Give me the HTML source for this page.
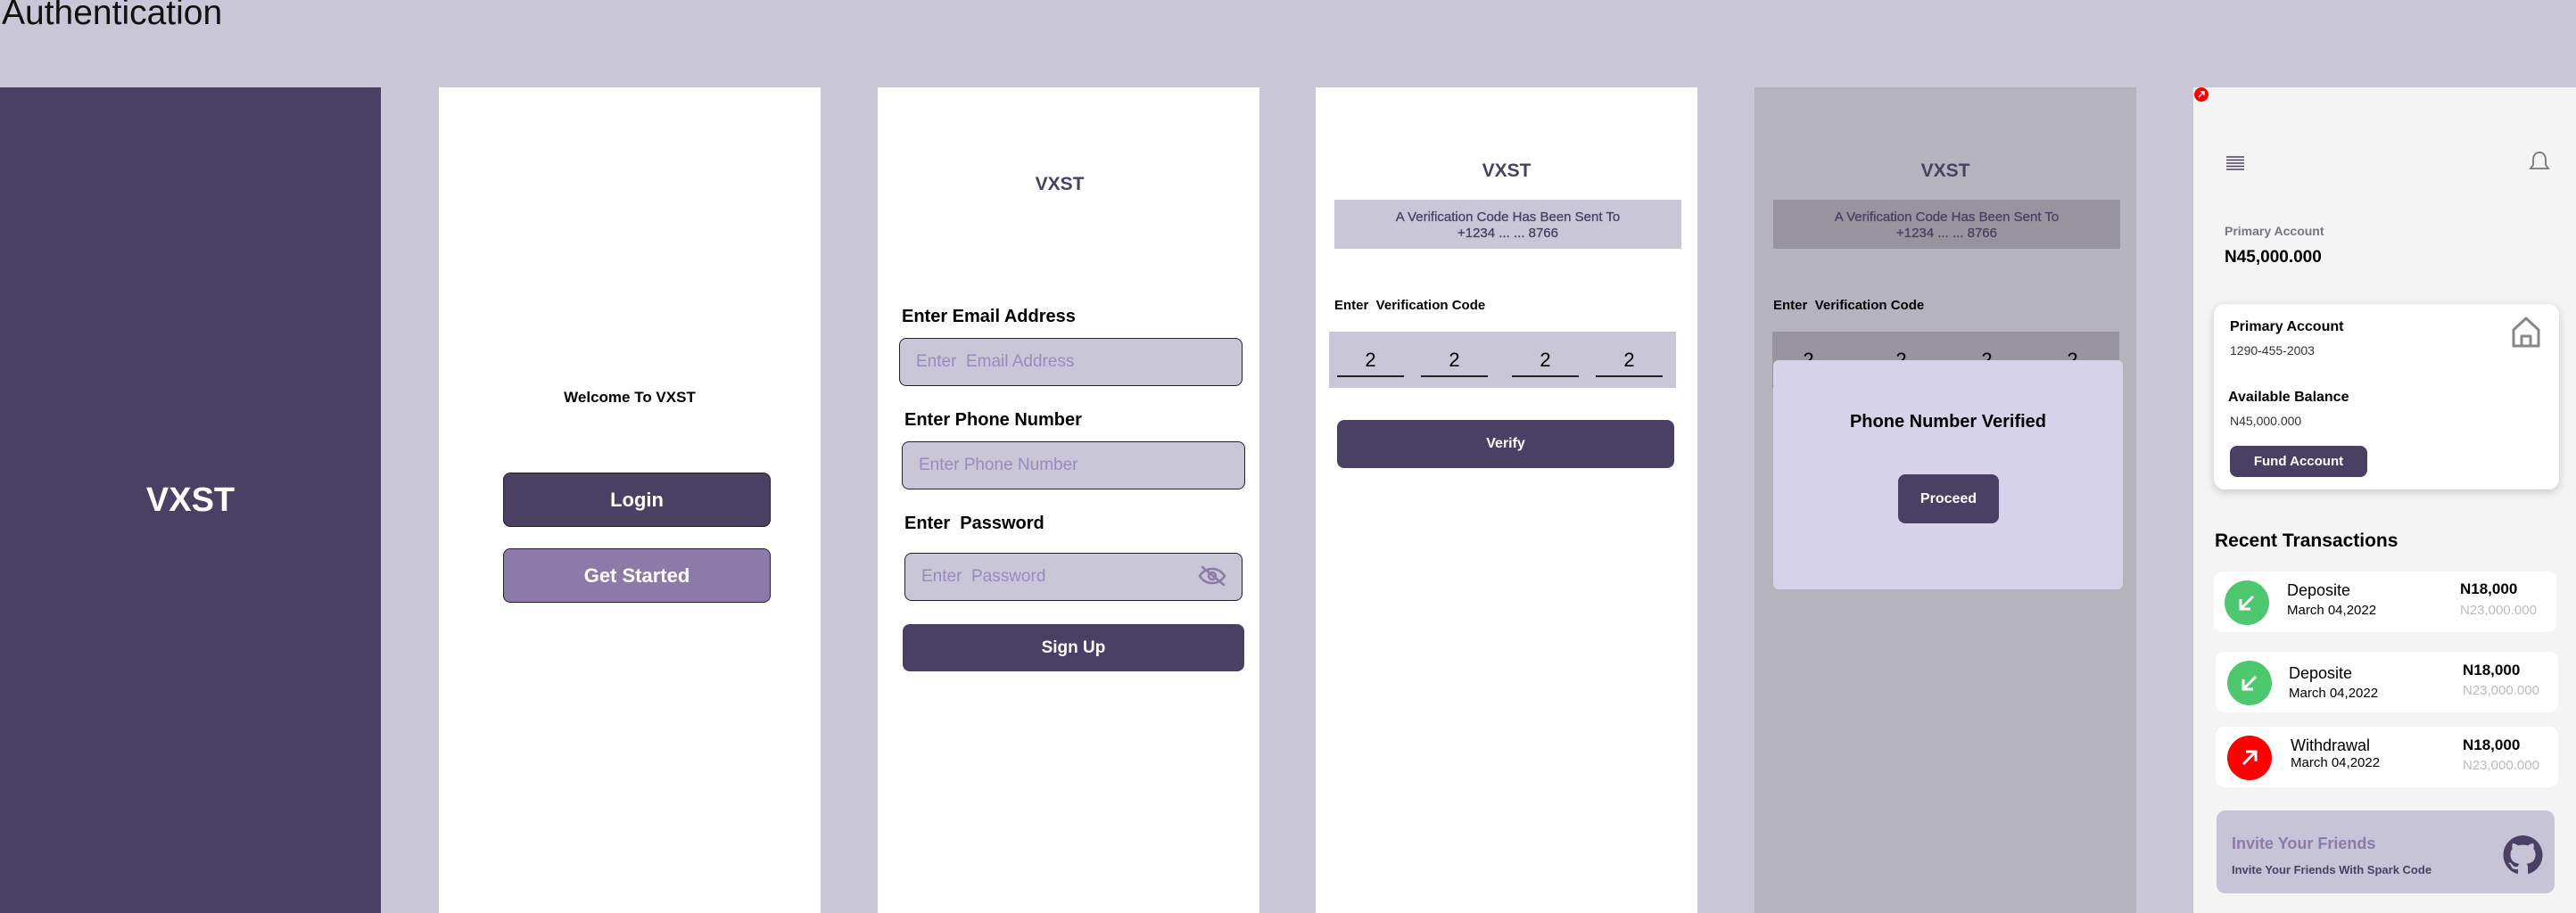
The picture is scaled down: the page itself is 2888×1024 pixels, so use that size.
<!DOCTYPE html>
<html><head><meta charset="utf-8"><style>
*{margin:0;padding:0;box-sizing:border-box}
body{width:2888px;height:1024px;background:#c9c6d8;position:relative;overflow:hidden;font-family:"Liberation Sans",sans-serif;color:#000}
.a{position:absolute}
.t{position:absolute;white-space:nowrap;line-height:1}
.fr{position:absolute;top:98px;height:926px;width:428px}
.inp{position:absolute;background:#c9c6d8;border:1.5px solid #222;border-radius:8px}
.ph{position:absolute;left:18px;top:50%;transform:translateY(-50%);color:#9b8bbd;font-size:19px;white-space:nowrap}
.btn{position:absolute;background:#4a4063;border-radius:8px;color:#fff;font-weight:bold;display:flex;align-items:center;justify-content:center}
.ul{position:absolute;height:2px;background:#222}
.dg{position:absolute;font-size:22px;width:75px;text-align:center;line-height:1}
.row{position:absolute;background:#fff;border-radius:10px}
.circ{position:absolute;width:50px;height:50px;border-radius:50%}
</style></head><body>
<div class="t" style="left:2px;top:-5px;font-size:39px;color:#111">Authentication</div>

<!-- frame1 -->
<div class="fr" style="left:0;width:427px;background:#4a4063"></div>
<div class="t" style="left:0;width:427px;text-align:center;top:542px;font-size:38px;font-weight:bold;color:#fff">VXST</div>

<!-- frame2 -->
<div class="fr" style="left:492px;background:#fff"></div>
<div class="t" style="left:492px;width:428px;text-align:center;top:437px;font-size:17px;font-weight:bold">Welcome To VXST</div>
<div class="btn" style="left:564px;top:530px;width:300px;height:61px;border:1.5px solid #222;font-size:22px">Login</div>
<div class="btn" style="left:564px;top:615px;width:300px;height:61px;border:1.5px solid #222;background:#8c7aa9;font-size:22px">Get Started</div>

<!-- frame3 -->
<div class="fr" style="left:984px;background:#fff"></div>
<div class="t" style="left:974px;width:428px;text-align:center;top:196px;font-size:21px;font-weight:bold;color:#4a4063">VXST</div>
<div class="t" style="left:1011px;top:345px;font-size:20px;font-weight:bold">Enter Email Address</div>
<div class="inp" style="left:1008px;top:379px;width:385px;height:54px"><span class="ph">Enter&nbsp; Email Address</span></div>
<div class="t" style="left:1014px;top:461px;font-size:20px;font-weight:bold">Enter Phone Number</div>
<div class="inp" style="left:1011px;top:495px;width:385px;height:54px"><span class="ph">Enter Phone Number</span></div>
<div class="t" style="left:1014px;top:577px;font-size:20px;font-weight:bold">Enter&nbsp; Password</div>
<div class="inp" style="left:1014px;top:620px;width:379px;height:54px"><span class="ph">Enter&nbsp; Password</span>
<svg class="a" style="left:328px;top:13px" width="32" height="24" viewBox="0 0 32 24" fill="none" stroke="#8c7aa9" stroke-width="2.5" stroke-linecap="round"><path d="M2 12C6 6 11 4 16 4s10 2 14 8c-4 6-9 8-14 8S6 18 2 12z"/><circle cx="16" cy="12" r="4"/><path d="M5 2l24 20"/></svg></div>
<div class="btn" style="left:1012px;top:700px;width:383px;height:53px;font-size:19px">Sign Up</div>

<!-- frame4 -->
<div class="fr" style="left:1475px;background:#fff"></div>
<div class="t" style="left:1475px;width:428px;text-align:center;top:181px;font-size:21px;font-weight:bold;color:#4a4063">VXST</div>
<div class="a" style="left:1496px;top:224px;width:389px;height:55px;background:#c9c6d8"></div>
<div class="t" style="left:1496px;width:389px;text-align:center;top:235px;font-size:15px;color:#4a4063;line-height:18px;-webkit-text-stroke:0.3px #4a4063">A Verification Code Has Been Sent To<br>+1234 ... ... 8766</div>
<div class="t" style="left:1496px;top:335px;font-size:15px;font-weight:bold">Enter&nbsp; Verification Code</div>
<div class="a" style="left:1490px;top:372px;width:389px;height:63px;background:#c9c6d8"></div>
<div class="dg" style="left:1499px;top:393px">2</div><div class="dg" style="left:1593px;top:393px">2</div><div class="dg" style="left:1695px;top:393px">2</div><div class="dg" style="left:1789px;top:393px">2</div>
<div class="ul" style="left:1499px;top:421px;width:75px"></div><div class="ul" style="left:1593px;top:421px;width:75px"></div><div class="ul" style="left:1695px;top:421px;width:75px"></div><div class="ul" style="left:1789px;top:421px;width:75px"></div>
<div class="btn" style="left:1499px;top:471px;width:378px;height:54px;font-size:16px">Verify</div>

<!-- frame5 -->
<div class="fr" style="left:1967px;background:#b5b3be"></div>
<div class="t" style="left:1967px;width:428px;text-align:center;top:181px;font-size:21px;font-weight:bold;color:#4a4063">VXST</div>
<div class="a" style="left:1988px;top:224px;width:389px;height:55px;background:#97939f"></div>
<div class="t" style="left:1988px;width:389px;text-align:center;top:235px;font-size:15px;color:#4a4063;line-height:18px;-webkit-text-stroke:0.3px #4a4063">A Verification Code Has Been Sent To<br>+1234 ... ... 8766</div>
<div class="t" style="left:1988px;top:335px;font-size:15px;font-weight:bold">Enter&nbsp; Verification Code</div>
<div class="a" style="left:1987px;top:372px;width:389px;height:63px;background:#97939f"></div>
<div class="dg" style="left:1990px;top:393px">2</div><div class="dg" style="left:2094px;top:393px">2</div><div class="dg" style="left:2190px;top:393px">2</div><div class="dg" style="left:2286px;top:393px">2</div>
<div class="a" style="left:1988px;top:404px;width:392px;height:257px;background:#d5d2ea;border-radius:6px"></div>
<div class="t" style="left:1988px;width:392px;text-align:center;top:463px;font-size:20px;font-weight:bold">Phone Number Verified</div>
<div class="btn" style="left:2128px;top:532px;width:113px;height:55px;font-size:16px">Proceed</div>

<!-- frame6 -->
<div class="fr" style="left:2459px;width:429px;background:#f4f4f4"></div>
<div class="a" style="left:2460px;top:98px;width:16px;height:16px;border-radius:50%;background:#f00"></div>
<svg class="a" style="left:2463px;top:101px" width="10" height="10" fill="none" stroke="#fff" stroke-width="1.4"><path d="M2 8L8 2M4 2h4v4"/></svg>
<svg class="a" style="left:2496px;top:175px" width="20" height="16"><g stroke="#4a4063" stroke-width="1.6"><path d="M0 1h20M0 4.5h20M0 8h20M0 11.5h20M0 15h20"/></g></svg>
<svg class="a" style="left:2835px;top:169px" width="24" height="25" viewBox="0 0 24 25" fill="none" stroke="#777" stroke-width="1.8"><path d="M12 2c-4.5 0-7 3.5-7 8v6l-3 4h20l-3-4v-6c0-4.5-2.5-8-7-8z"/><path d="M12 1v2"/></svg>
<div class="t" style="left:2494px;top:252px;font-size:14px;font-weight:bold;color:#7a748a">Primary Account</div>
<div class="t" style="left:2494px;top:279px;font-size:19px;font-weight:bold">N45,000.000</div>
<div class="a" style="left:2482px;top:341px;width:387px;height:208px;background:#fff;border-radius:12px;box-shadow:0 3px 10px rgba(0,0,0,.18)"></div>
<div class="t" style="left:2500px;top:359px;font-size:16px;font-weight:bold">Primary Account</div>
<div class="t" style="left:2500px;top:386px;font-size:14px;color:#333">1290-455-2003</div>
<svg class="a" style="left:2816px;top:355px" width="32" height="35" viewBox="0 0 32 35" fill="none" stroke="#888" stroke-width="3" stroke-linejoin="round"><path d="M2 15L16 2l14 13v18H2z"/><path d="M11 33V22h10v11"/></svg>
<div class="t" style="left:2498px;top:438px;font-size:16px;font-weight:bold">Available Balance</div>
<div class="t" style="left:2500px;top:465px;font-size:14px;color:#333">N45,000.000</div>
<div class="btn" style="left:2500px;top:500px;width:154px;height:35px;font-size:15px">Fund Account</div>
<div class="t" style="left:2483px;top:596px;font-size:21px;font-weight:bold">Recent Transactions</div>

<div class="row" style="left:2482px;top:641px;width:384px;height:68px"></div>
<div class="circ" style="left:2494px;top:651px;background:#4ec86f"></div>
<svg class="a" style="left:2507px;top:664px" width="24" height="24" fill="none" stroke="#fff" stroke-width="3"><path d="M19 5L6 18M5 8v11h11"/></svg>
<div class="t" style="left:2564px;top:653px;font-size:18px">Deposite</div>
<div class="t" style="left:2564px;top:677px;font-size:15px">March 04,2022</div>
<div class="t" style="left:2758px;top:652px;font-size:17px;font-weight:bold">N18,000</div>
<div class="t" style="left:2758px;top:677px;font-size:15px;color:#bbb">N23,000.000</div>

<div class="row" style="left:2484px;top:731px;width:384px;height:68px"></div>
<div class="circ" style="left:2497px;top:741px;background:#4ec86f"></div>
<svg class="a" style="left:2510px;top:754px" width="24" height="24" fill="none" stroke="#fff" stroke-width="3"><path d="M19 5L6 18M5 8v11h11"/></svg>
<div class="t" style="left:2566px;top:746px;font-size:18px">Deposite</div>
<div class="t" style="left:2566px;top:770px;font-size:15px">March 04,2022</div>
<div class="t" style="left:2761px;top:743px;font-size:17px;font-weight:bold">N18,000</div>
<div class="t" style="left:2761px;top:767px;font-size:15px;color:#bbb">N23,000.000</div>

<div class="row" style="left:2484px;top:815px;width:384px;height:68px"></div>
<div class="circ" style="left:2497px;top:825px;background:#f00"></div>
<svg class="a" style="left:2510px;top:838px" width="24" height="24" fill="none" stroke="#fff" stroke-width="3"><path d="M5 19L18 6M8 5h11v11"/></svg>
<div class="t" style="left:2568px;top:827px;font-size:18px">Withdrawal</div>
<div class="t" style="left:2568px;top:848px;font-size:15px">March 04,2022</div>
<div class="t" style="left:2761px;top:827px;font-size:17px;font-weight:bold">N18,000</div>
<div class="t" style="left:2761px;top:851px;font-size:15px;color:#bbb">N23,000.000</div>

<div class="a" style="left:2485px;top:909px;width:379px;height:93px;background:#c8c4d8;border-radius:10px"></div>
<div class="t" style="left:2502px;top:937px;font-size:18px;font-weight:bold;color:#8c7aa9">Invite Your Friends</div>
<div class="t" style="left:2502px;top:969px;font-size:13px;font-weight:bold;color:#4a4063">Invite Your Friends With Spark Code</div>
<svg class="a" style="left:2806px;top:937px" width="45" height="44" viewBox="0 0 16 16"><path fill="#4a4063" d="M8 0C3.580 0 0 3.580 0 8c0 3.540 2.290 6.530 5.470 7.590.4.07.55-.17.55-.38 0-.19-.01-.82-.01-1.490-2.010.37-2.530-.49-2.690-.94-.09-.23-.48-.94-.82-1.130-.28-.15-.68-.52-.01-.53.63-.01 1.080.58 1.230.82.72 1.210 1.870.87 2.330.66.07-.52.28-.87.51-1.070-1.780-.2-3.640-.89-3.640-3.950 0-.87.31-1.590.82-2.150-.08-.2-.36-1.020.08-2.120 0 0 .67-.21 2.200.82.64-.18 1.320-.27 2-.27.68 0 1.360.09 2 .27 1.530-1.040 2.200-.82 2.200-.82.44 1.100.16 1.920.08 2.120.51.56.82 1.270.82 2.150 0 3.070-1.870 3.750-3.650 3.950.29.25.54.73.54 1.480 0 1.070-.01 1.930-.01 2.200 0 .21.15.46.55.38A8.013 8.013 0 0016 8c0-4.420-3.580-8-8-8z"/></svg>
</body></html>
